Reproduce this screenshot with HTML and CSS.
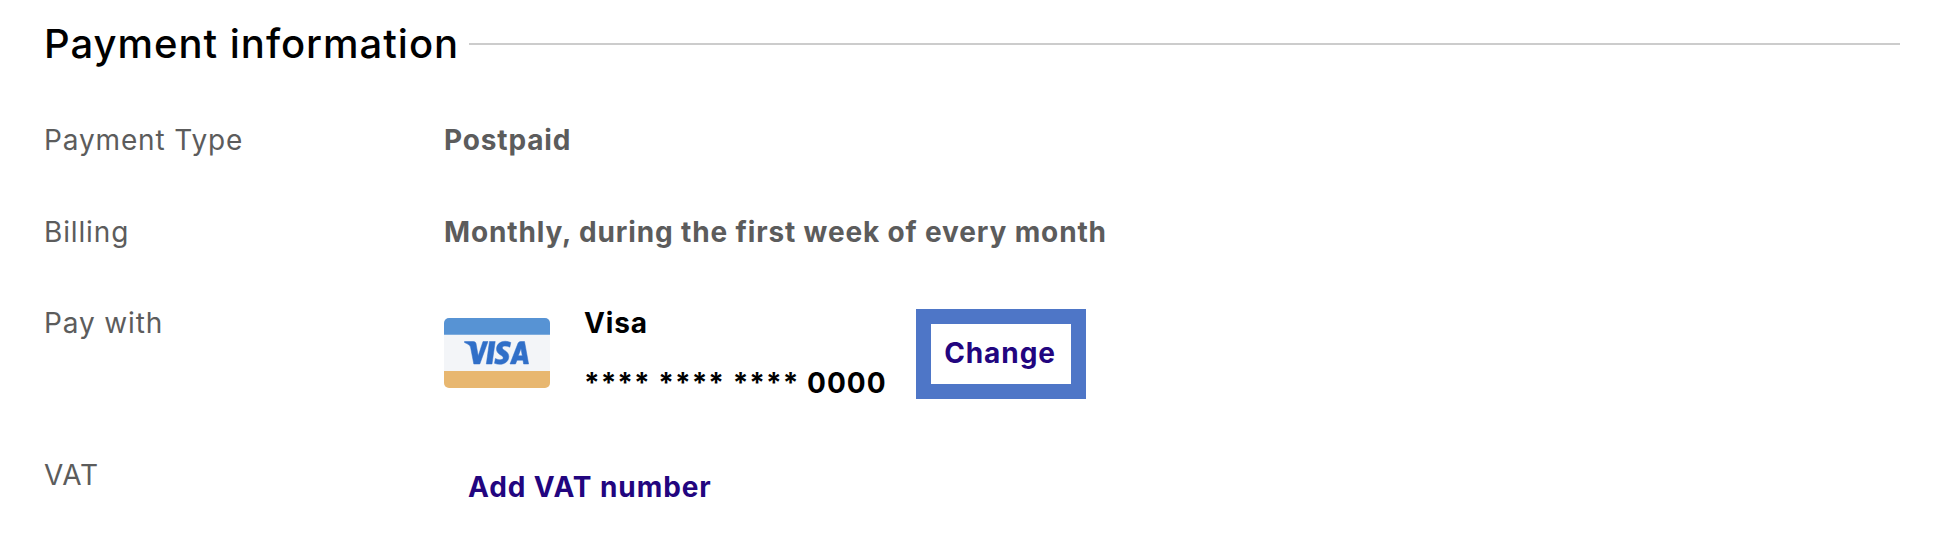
FILE: index.html
```html
<!DOCTYPE html>
<html lang="en">
<head>
<meta charset="utf-8">
<title>Payment information</title>
<link rel="stylesheet" href="styles.css">
</head>
<body>
<main class="payment">
  <header class="heading"><h1 class="title">Payment information</h1><span class="rule"></span></header>
  <dl class="details">
    <dt class="label">Payment Type</dt><dd class="value">Postpaid</dd>
    <dt class="label">Billing</dt><dd class="value">Monthly, during the first week of every month</dd>
    <dt class="label">Pay with</dt>
    <dd class="method">
      <svg class="card" viewBox="0 0 106 70" role="img" aria-label="Visa">
        <path fill="#f3f5f8" d="M0 16h106v38H0z"/>
        <path fill="#5793d4" d="M5 0h96a5 5 0 0 1 5 5v11.700H0V5a5 5 0 0 1 5-5z"/>
        <path fill="#e8b770" d="M0 53h106v12a5 5 0 0 1-5 5H5a5 5 0 0 1-5-5z"/>
        <g fill="#306fc8" stroke="#306fc8" stroke-width=".5">
          <path d="M20.500 23.500h9q2 0 2.500 2l2.200 12.500 4.800-14.500h5L35.800 46h-6L26.500 29q-.5-2.500-6-4.500z"/>
          <path d="M45.500 23.500h5.700L48 46h-5.700z"/>
          <path d="M66.800 24.500l-1 4.700c-3-1.500-7.500-1.600-7.500.5 0 2.500 6.500 3.300 6.500 8.800 0 6.500-7 9.500-14.300 6.800l.9-4.800c3 1.700 7.800 1.900 7.800-.7 0-2.600-6.700-3.300-6.700-8.700 0-6.500 7-9.800 14.300-6.600z"/>
          <path fill-rule="evenodd" d="M76.500 23.500h4L84.600 46h-5l-.6-3.800h-6L71.500 46H66l8-20.700q.8-1.800 2.500-1.800zM77 30.500l-2.700 7.300h4z"/>
        </g>
      </svg>
      <div class="card-info"><span>Visa</span><span class="number">**** **** **** 0000</span></div>
      <button class="change">Change</button>
    </dd>
    <dt class="label">VAT</dt><dd class="vat"><a class="vat-link">Add VAT number</a></dd>
  </dl>
</main>
</body>
</html>
```
FILE: styles.css
```css
body { margin: 0; background: #fff; color: #000; font-family: Inter, sans-serif; }
.payment { padding: 14px 34px 0 44px; }
.heading { display: flex; align-items: center; gap: 10px; height: 60px; }
.title { margin: 0; font-size: 40px; font-weight: 500; line-height: 60px; letter-spacing: .98px; white-space: nowrap; }
.rule { flex: 1; height: 2px; background: #ccc; }
.details { display: grid; grid-template-columns: 400px 1fr; grid-template-rows: 92px 91px 152px 70px; margin: 45px 0 0; font-size: 28px; line-height: 42px; letter-spacing: .86px; }
.label { color: #5c5c5c; }
.value, .method, .vat { margin: 0; font-weight: 700; }
.value { color: #5c5c5c; }
.method { display: flex; align-items: flex-start; }
.card { width: 106px; height: 70px; margin-top: 16px; }
.card-info { display: flex; flex-direction: column; gap: 18px; width: 303px; margin-left: 34px; white-space: nowrap; }
.number { letter-spacing: 1.02px; }
.change { box-sizing: border-box; width: 170px; height: 90px; margin: 7px 0 0 29px; padding: 0 2px 3px 0; border: 15px solid #4e76c7; background: #fff; color: #22057f; font: inherit; letter-spacing: .92px; }
.vat { padding: 12px 0 0 24px; }
.vat-link { color: #22057f; letter-spacing: .92px; }
```
